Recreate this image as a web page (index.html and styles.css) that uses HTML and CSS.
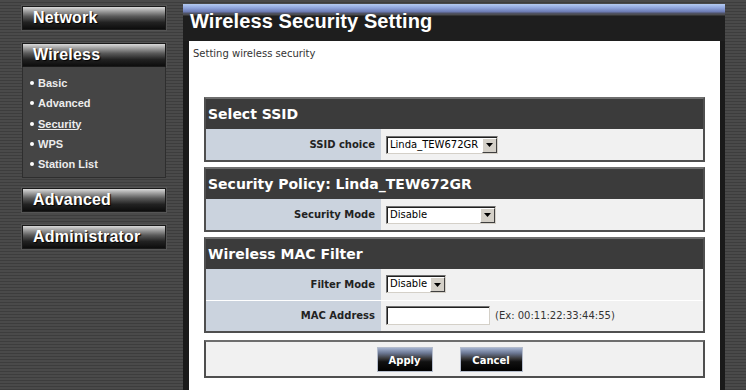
FILE: index.html
```html
<!DOCTYPE html>
<html lang="en">
<head>
    <meta charset="UTF-8">
    <meta name="viewport" content="width=device-width, initial-scale=1.0">
    <title>Wireless Security Setting</title>
    <link rel="stylesheet" href="styles.css">
</head>
<body>

    <!-- Left menu -->
    <aside class="sidebar">
        <a class="nav-btn" href="#">Network</a>
        <a class="nav-btn nav-open" href="#">Wireless</a>
        <ul class="submenu">
            <li><a href="#">Basic</a></li>
            <li><a href="#">Advanced</a></li>
            <li><a href="#" class="current">Security</a></li>
            <li><a href="#">WPS</a></li>
            <li><a href="#">Station List</a></li>
        </ul>
        <a class="nav-btn nav-advanced" href="#">Advanced</a>
        <a class="nav-btn nav-admin" href="#">Administrator</a>
    </aside>

    <!-- Main panel -->
    <main class="main">
        <div class="title-bar">
            <h1>Wireless Security Setting</h1>
        </div>

        <div class="content">
            <p class="intro">Setting wireless security</p>

            <form class="settings-form">
                <!-- Select SSID -->
                <div class="section">
                    <h2>Select SSID</h2>
                    <table>
                        <tr>
                            <td class="label">SSID choice</td>
                            <td class="value">
                                <span class="select select-ssid">
                                    <select name="ssid">
                                        <option>Linda_TEW672GR</option>
                                    </select>
                                    <span class="arrow"><svg width="7" height="4" viewBox="0 0 7 4"><path d="M0 0h7L3.5 4z" fill="#000"/></svg></span>
                                </span>
                            </td>
                        </tr>
                    </table>
                </div>

                <!-- Security Policy -->
                <div class="section">
                    <h2>Security Policy: Linda_TEW672GR</h2>
                    <table>
                        <tr>
                            <td class="label">Security Mode</td>
                            <td class="value">
                                <span class="select select-mode">
                                    <select name="security_mode">
                                        <option>Disable</option>
                                        <option>WEP</option>
                                        <option>WPA-PSK</option>
                                    </select>
                                    <span class="arrow"><svg width="7" height="4" viewBox="0 0 7 4"><path d="M0 0h7L3.5 4z" fill="#000"/></svg></span>
                                </span>
                            </td>
                        </tr>
                    </table>
                </div>

                <!-- Wireless MAC Filter -->
                <div class="section">
                    <h2>Wireless MAC Filter</h2>
                    <table>
                        <tr>
                            <td class="label">Filter Mode</td>
                            <td class="value">
                                <span class="select select-filter">
                                    <select name="filter_mode">
                                        <option>Disable</option>
                                        <option>Allow</option>
                                        <option>Reject</option>
                                    </select>
                                    <span class="arrow"><svg width="7" height="4" viewBox="0 0 7 4"><path d="M0 0h7L3.5 4z" fill="#000"/></svg></span>
                                </span>
                            </td>
                        </tr>
                        <tr>
                            <td class="label">MAC Address</td>
                            <td class="value">
                                <input type="text" class="mac-input" name="mac_address"><span class="hint">(Ex: 00:11:22:33:44:55)</span>
                            </td>
                        </tr>
                    </table>
                </div>

                <!-- Buttons -->
                <div class="section button-row">
                    <button type="submit" class="btn btn-apply">Apply</button>
                    <button type="reset" class="btn btn-cancel">Cancel</button>
                </div>
            </form>
        </div>
    </main>

    <div class="edge"></div>

</body>
</html>
```

FILE: styles.css
```css
html, body {
    height: 100%;
}

body {
    margin: 0;
    display: flex;
    overflow: hidden;
    font-family: "DejaVu Sans", Tahoma, sans-serif;
    font-size: 10px;
    background: repeating-linear-gradient(to bottom, #4a4a4a 0, #4a4a4a 2px, #3d3d3d 2px, #3d3d3d 3px);
}

/* ---------- left menu ---------- */

.sidebar {
    width: 183px;
    flex: none;
    box-sizing: border-box;
    padding: 6px 0 0 22px;
}

.nav-btn {
    display: block;
    box-sizing: border-box;
    width: 144px;
    height: 24px;
    padding-left: 10px;
    border: 1px solid #1a1a1a;
    box-shadow: 0 0 0 1px #555;
    background: linear-gradient(to bottom, #dadada 0%, #a8a8a8 16%, #5a5a5a 42%, #222 70%, #0d0d0d 100%);
    color: #fff;
    font-family: "Liberation Sans", Arial, sans-serif;
    font-size: 16px;
    font-weight: bold;
    letter-spacing: 0.2px;
    line-height: 22px;
    text-decoration: none;
    text-shadow: 1px 1px 1px #000;
    margin-bottom: 13px;
}

.nav-open {
    margin-bottom: 0;
}

.nav-advanced {
    margin-top: 10px;
}

.submenu {
    list-style: none;
    margin: 0;
    padding: 6px 0 3px;
    width: 144px;
    box-sizing: border-box;
    background-color: #454545;
    border: 1px solid #2e2e2e;
    border-top: none;
}

.submenu li {
    position: relative;
    height: 20.25px;
    line-height: 20px;
    padding-left: 15px;
}

.submenu li::before {
    content: "";
    position: absolute;
    left: 7px;
    top: 8px;
    width: 4px;
    height: 4px;
    border-radius: 50%;
    background-color: #fff;
}

.submenu a {
    color: #ececec;
    font-family: "Liberation Sans", Arial, sans-serif;
    font-size: 11px;
    font-weight: bold;
    text-decoration: none;
}

.submenu a.current {
    text-decoration: underline;
}

/* ---------- main panel ---------- */

.main {
    width: 542px;
    flex: none;
    margin-top: 4px;
    display: flex;
    flex-direction: column;
    background-color: #1a1a1a;
}

.title-bar {
    height: 37px;
    box-sizing: border-box;
    padding: 7px 0 0 7px;
    background: linear-gradient(to bottom, #b4cbf2 0px, #8ea4dc 4px, #6a78b0 8px, #50546a 9px, #4a4a4a 11px, #1e1e1e 12px);
}

.title-bar h1 {
    margin: 0;
    color: #fff;
    font-family: "Liberation Sans", Arial, sans-serif;
    font-size: 20px;
    line-height: 20px;
    font-weight: bold;
    letter-spacing: 0.1px;
}

.content {
    flex: 1;
    margin: 0 5px 0 6px;
    padding: 6px 0 0 4px;
    background-color: #fff;
}

.intro {
    margin: 0;
    color: #333;
    line-height: 14px;
}

.settings-form {
    margin: 36px 15px 0 11px;
}

.section {
    border: 2px solid #4f4f4f;
    border-top-color: #6e6e6e;
    margin-bottom: 5px;
}

.section h2 {
    margin: 0;
    height: 30px;
    padding-left: 2px;
    background-color: #3b3b3b;
    color: #fff;
    font-size: 14px;
    line-height: 30px;
    font-weight: bold;
}

.section table {
    width: 100%;
    border-collapse: collapse;
}

.section td {
    height: 31px;
    padding: 0;
    box-sizing: border-box;
}

.section tr + tr td {
    border-top: 1px solid #fff;
}

td.label {
    width: 175px;
    padding-right: 6px;
    text-align: right;
    background-color: #cbd3de;
    color: #222;
    font-weight: bold;
}

td.value {
    padding-left: 5px;
    background-color: #f1f1f1;
    color: #333;
}

/* select boxes drawn like the old windows controls */
.select {
    position: relative;
    display: inline-block;
    vertical-align: middle;
    height: 18px;
    box-sizing: border-box;
    border: 1px solid #707070;
    border-right-color: #d4d0c8;
    border-bottom-color: #d4d0c8;
    box-shadow: inset 1px 1px 0 #202020;
    background-color: #fff;
}

.select select {
    appearance: none;
    -webkit-appearance: none;
    display: block;
    width: 100%;
    height: 16px;
    border: none;
    background: transparent;
    padding: 0 0 0 3px;
    margin: 0;
    font-family: "DejaVu Sans", Tahoma, sans-serif;
    font-size: 10px;
    line-height: 16px;
    color: #000;
    outline: none;
}

.select .arrow {
    position: absolute;
    top: 1px;
    right: 0;
    width: 15px;
    height: 15px;
    box-sizing: border-box;
    display: flex;
    align-items: center;
    justify-content: center;
    background-color: #d4d0c8;
    border: 1px solid #404040;
    border-top-color: #fff;
    border-left-color: #fff;
    pointer-events: none;
}

.select-ssid {
    width: 112px;
}

.select-mode {
    width: 110px;
}

.select-filter {
    width: 60px;
}

.mac-input {
    vertical-align: middle;
    width: 104px;
    height: 19px;
    box-sizing: border-box;
    border: 1px solid #707070;
    border-right-color: #d4d0c8;
    border-bottom-color: #d4d0c8;
    box-shadow: inset 1px 1px 0 #202020;
    padding: 0 3px;
    margin: 0;
    font-family: "DejaVu Sans", Tahoma, sans-serif;
    font-size: 10px;
}

.hint {
    margin-left: 5px;
    vertical-align: middle;
    color: #333;
}

/* ---------- buttons ---------- */

.button-row {
    margin-top: 7px;
    height: 38px;
    box-sizing: border-box;
    display: flex;
    align-items: center;
    justify-content: center;
    gap: 27px;
    padding-right: 10px;
    background-color: #f1f1f1;
}

.btn {
    height: 25px;
    padding: 0;
    border: 1px solid #b4bccc;
    background: linear-gradient(to bottom, #a4b2cf 0%, #6c7894 22%, #3a3a3c 45%, #111 60%, #000 100%);
    color: #fff;
    font-family: "DejaVu Sans", Tahoma, sans-serif;
    font-size: 10px;
    font-weight: bold;
    padding-top: 3px;
    cursor: pointer;
}

.btn-apply {
    width: 56px;
}

.btn-cancel {
    width: 63px;
}

/* right strip */
.edge {
    flex: 1;
}
```
